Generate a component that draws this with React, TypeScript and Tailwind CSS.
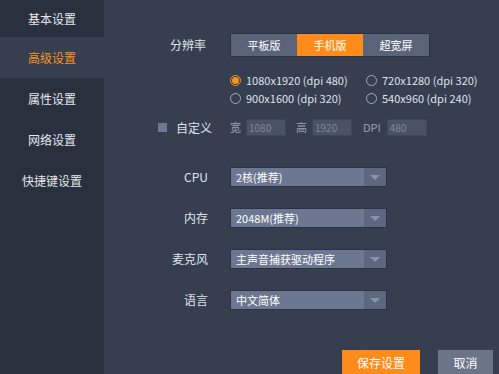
import { useState } from "react"

const menu = ["基本设置", "高级设置", "属性设置", "网络设置", "快捷键设置"]
const modes = ["平板版", "手机版", "超宽屏"]
const resolutions = [
  "1080x1920 (dpi 480)",
  "720x1280 (dpi 320)",
  "900x1600 (dpi 320)",
  "540x960 (dpi 240)",
]

function Select({ value }: { value: string }) {
  return (
    <div className="flex h-[20px] w-[157px] border border-[#2b3242] bg-[#6c7792]">
      <div className="flex-1 pl-[5px] text-[11px] leading-[18px] text-white">{value}</div>
      <div className="flex w-[22px] items-center justify-center bg-[#5d677f]">
        <div className="h-0 w-0 border-x-[5px] border-t-[5px] border-x-transparent border-t-[#8a93a8]" />
      </div>
    </div>
  )
}

function Field({ label, children }: { label: string; children: React.ReactNode }) {
  return (
    <div className="flex h-[20px] items-center">
      <div className="w-[78px] pr-[22px] text-right text-[12px] text-[#dfe3ea]">{label}</div>
      {children}
    </div>
  )
}

export default function App() {
  const [active] = useState(1)
  const [mode, setMode] = useState(1)
  const [res, setRes] = useState(0)

  return (
    <div
      className="flex h-[374px] w-[499px] overflow-hidden bg-[#363e50]"
      style={{ fontFamily: '"Noto Sans CJK SC", "Noto Sans", sans-serif' }}
    >
      <div className="flex w-[104px] flex-col bg-[#2a313e]">
        {menu.map((m, i) => (
          <div
            key={m}
            className={
              (i === 0 ? "h-[37px] " : "h-[41px] ") +
              "flex items-center justify-center text-[12px] " +
              (i === active ? "bg-[#363e50] text-[#f7931e]" : "text-[#e4e7ec]")
            }
          >
            {m}
          </div>
        ))}
      </div>

      <div className="flex flex-1 flex-col pl-[48px] pt-[33px]">
        <div className="flex h-[24px] items-center">
          <div className="w-[78px] pl-[18px] text-[12px] text-[#dfe3ea]">分辨率</div>
          <div className="flex border border-[#2b3242]">
            {modes.map((m, i) => (
              <div
                key={m}
                onClick={() => setMode(i)}
                className={
                  "flex h-[22px] w-[66px] items-center justify-center text-[11px] text-white " +
                  (i === mode ? "bg-[#ff8c1a]" : "bg-[#5a6479]")
                }
              >
                {m}
              </div>
            ))}
          </div>
        </div>

        <div className="ml-[78px] mt-[16px] grid w-max grid-cols-[136px_auto] gap-y-[3px]">
          {resolutions.map((r, i) => (
            <div key={r} className="flex h-[15px] items-center gap-[5px]" onClick={() => setRes(i)}>
              {i === res ? (
                <div className="flex h-[11px] w-[11px] items-center justify-center rounded-full border border-[#f7931e]">
                  <div className="h-[7px] w-[7px] rounded-full bg-[#f7931e]" />
                </div>
              ) : (
                <div className="h-[11px] w-[11px] rounded-full border border-[#a2a9b7]" />
              )}
              <span className="whitespace-nowrap text-[11px] text-[#dfe3ea]">{r}</span>
            </div>
          ))}
        </div>

        <div className="mt-[13px] flex h-[17px] items-center">
          <div className="ml-[6px] h-[9px] w-[9px] bg-[#6c7792]" />
          <div className="ml-[9px] w-[54px] text-[12px] text-[#dfe3ea]">自定义</div>
          <div className="flex items-center gap-[5px] text-[11px]">
            <span className="text-[#9aa1b0]">宽</span>
            <div className="h-[17px] w-[40px] border border-[#3e4659] bg-[#4a5366] pl-[2px] text-[10px] leading-[15px] text-[#7e8698]">1080</div>
          </div>
          <div className="ml-[10px] flex items-center gap-[5px] text-[11px]">
            <span className="text-[#9aa1b0]">高</span>
            <div className="h-[17px] w-[40px] border border-[#3e4659] bg-[#4a5366] pl-[2px] text-[10px] leading-[15px] text-[#7e8698]">1920</div>
          </div>
          <div className="ml-[11px] flex items-center gap-[6px] text-[11px]">
            <span className="text-[#9aa1b0]">DPI</span>
            <div className="h-[17px] w-[40px] border border-[#3e4659] bg-[#4a5366] pl-[2px] text-[10px] leading-[15px] text-[#7e8698]">480</div>
          </div>
        </div>

        <div className="mt-[31px] flex flex-col gap-[21px]">
          <Field label="CPU">
            <Select value="2核(推荐)" />
          </Field>
          <Field label="内存">
            <Select value="2048M(推荐)" />
          </Field>
          <Field label="麦克风">
            <Select value="主声音捕获驱动程序" />
          </Field>
          <Field label="语言">
            <Select value="中文简体" />
          </Field>
        </div>

        <div className="mb-[-6px] mt-auto flex justify-end gap-[18px] pr-[6px]">
          <button className="h-[30px] w-[78px] bg-[#ff8c1a] pb-[4px] text-[12px] text-white">保存设置</button>
          <button className="h-[30px] w-[55px] bg-[#6c7488] pb-[4px] text-[12px] text-white">取消</button>
        </div>
      </div>
    </div>
  )
}
